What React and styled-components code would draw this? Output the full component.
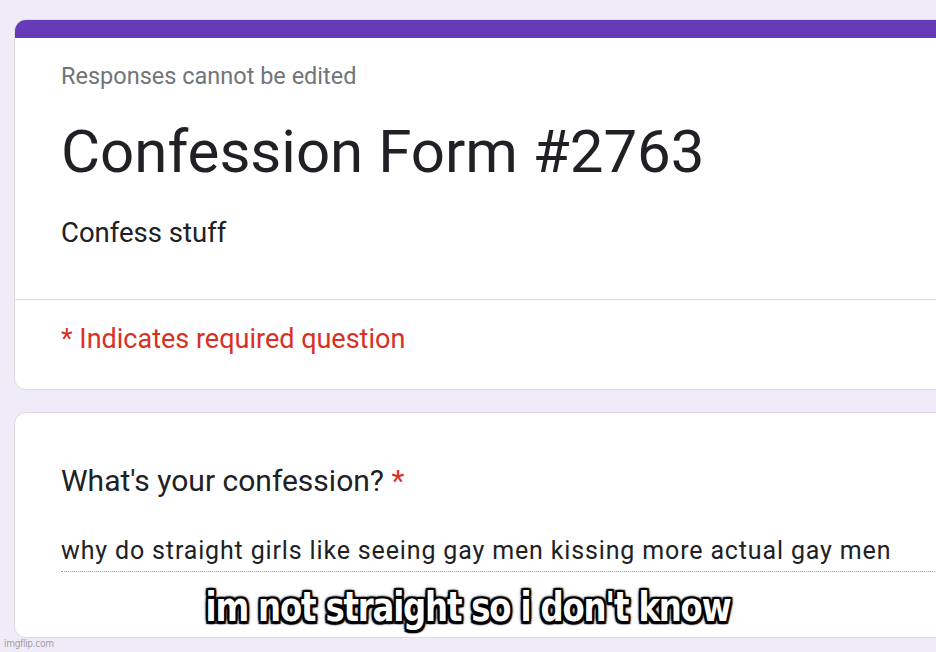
import React from "react";
import styled, { createGlobalStyle } from "styled-components";

const GlobalStyle = createGlobalStyle`
  html, body {
    margin: 0;
    padding: 0;
    background: #f0ebf8;
    overflow: hidden;
  }
  body {
    font-family: Roboto, "Liberation Sans", sans-serif;
  }
`;

const Page = styled.div`
  position: relative;
  width: 936px;
  height: 652px;
  overflow: hidden;
  padding: 19px 0 0 14px;
  box-sizing: border-box;
  display: flex;
  flex-direction: column;
  gap: 22px;
`;

const Card = styled.section`
  width: 1000px;
  height: ${(p) => p.$height}px;
  flex-shrink: 0;
  box-sizing: border-box;
  background: #fff;
  border: 1px solid #dadce0;
  border-radius: 12px;
  overflow: hidden;
  display: flex;
  flex-direction: column;
`;

const TopBar = styled.div`
  height: 19px;
  background: #673ab7;
  margin: -1px -1px 0;
  flex-shrink: 0;
`;

const Header = styled.div`
  padding: 24px 0 0 46px;
  height: 262px;
  flex-shrink: 0;
  box-sizing: border-box;
  border-bottom: 1px solid #dadce0;
`;

const Notice = styled.div`
  font-size: 23.5px;
  line-height: 28px;
  color: #70757a;
`;

const Title = styled.h1`
  margin: 27px 0 0;
  font-weight: 400;
  font-size: 60px;
  line-height: 70px;
  color: #202124;
`;

const Description = styled.p`
  margin: 30px 0 0;
  font-size: 27.5px;
  line-height: 32px;
  color: #202124;
`;

const Required = styled.div`
  padding: 23px 0 0 46px;
  font-size: 27px;
  line-height: 32px;
  color: #d93025;
`;

const Question = styled.div`
  padding: 50px 0 0 46px;
`;

const Label = styled.h2`
  margin: 0;
  font-weight: 400;
  font-size: 30px;
  line-height: 36px;
  color: #202124;
`;

const Star = styled.span`
  color: #d93025;
`;

const Answer = styled.div`
  margin-top: 38px;
  padding-bottom: 6px;
  font-size: 25px;
  line-height: 28px;
  letter-spacing: 0.85px;
  color: #202124;
  border-bottom: 1px dotted #9aa0a6;
`;

const Caption = styled.div`
  position: absolute;
  left: 0;
  top: 588px;
  width: 936px;
  text-align: center;
  font-family: "DejaVu Sans Condensed", "DejaVu Sans", sans-serif;
  font-stretch: condensed;
  font-weight: 700;
  font-size: 36px;
  line-height: 40px;
  letter-spacing: -1.2px;
  color: #fff;
  transform: scaleY(1.12);
  text-shadow:
    2px 2px 1px #000, -2px 2px 1px #000, 2px -2px 1px #000, -2px -2px 1px #000,
    0 2px 1px #000, 0 -2px 1px #000, 2px 0 1px #000, -2px 0 1px #000,
    0 0 5px #000, 0 0 3px #000;
`;

const Watermark = styled.div`
  position: absolute;
  left: 4px;
  top: 638px;
  font-family: "DejaVu Sans Condensed", "DejaVu Sans", sans-serif;
  font-stretch: condensed;
  font-size: 10px;
  line-height: 12px;
  color: #a0a0a0;
  letter-spacing: -0.3px;
`;

export default function App() {
  return (
    <>
      <GlobalStyle />
      <Page>
        <Card $height={371}>
          <TopBar />
          <Header>
            <Notice>Responses cannot be edited</Notice>
            <Title>Confession Form #2763</Title>
            <Description>Confess stuff</Description>
          </Header>
          <Required>* Indicates required question</Required>
        </Card>
        <Card $height={226}>
          <Question>
            <Label>
              What's your confession? <Star>*</Star>
            </Label>
            <Answer>
              why do straight girls like seeing gay men kissing more actual gay men
            </Answer>
          </Question>
        </Card>
        <Caption>im not straight so i don't know</Caption>
        <Watermark>imgflip.com</Watermark>
      </Page>
    </>
  );
}
